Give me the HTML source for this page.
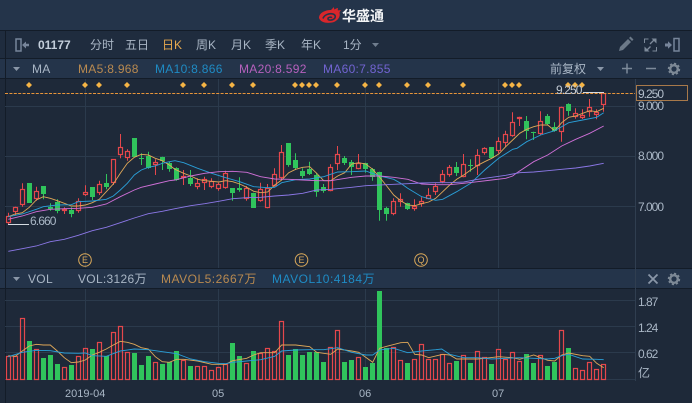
<!DOCTYPE html>
<html><head><meta charset="utf-8">
<style>
html,body{margin:0;padding:0;background:#1e2939}
#r{position:relative;width:692px;height:403px;overflow:hidden;background:#1e2939;font-family:"Liberation Sans","Noto Sans CJK SC",sans-serif;font-size:12px;color:#a9b6c5}
.b{position:absolute;left:0;width:692px}
.t{position:absolute;white-space:nowrap;line-height:16px;height:16px}
.a{font-size:11px;letter-spacing:-.5px}
svg{position:absolute;left:0;top:0}
</style></head><body>
<div id="r">
<div class="b" style="top:0;height:30px;background:#24344a"></div>
<div class="b" style="top:30px;height:1px;background:#131c28"></div>
<div class="b" style="top:31px;height:27px;background:#1f2c3e"></div>
<div class="b" style="top:58px;height:1px;background:#131c28"></div>
<div class="b" style="top:59px;height:19px;background:#24344a"></div>
<div class="b" style="top:78px;height:1px;background:#131c28"></div>
<div class="b" style="top:269px;height:19px;background:#24344a"></div>
<div class="b" style="top:268px;height:1px;background:#131c28"></div>
<div class="b" style="top:288px;height:1px;background:#131c28"></div>

<svg id="c" width="692" height="403" viewBox="0 0 692 403"></svg>

<div class="t" style="left:342px;top:7px;font-size:14px;font-weight:bold;color:#f2f4f6;line-height:18px;height:18px">华盛通</div>

<div class="t" style="left:38px;top:37px;font-weight:bold;color:#c3cedb">01177</div>
<div class="t" style="left:90px;top:37px">分时</div>
<div class="t" style="left:125px;top:37px">五日</div>
<div class="t" style="left:162px;top:37px;color:#e6a94f">日K</div>
<div class="t" style="left:196px;top:37px">周K</div>
<div class="t" style="left:231px;top:37px">月K</div>
<div class="t" style="left:265px;top:37px">季K</div>
<div class="t" style="left:301px;top:37px">年K</div>
<div class="t" style="left:343px;top:37px">1分</div>

<div class="t" style="left:32px;top:61px;letter-spacing:.3px">MA</div>
<div class="t" style="left:78px;top:61px;color:#b98a50;letter-spacing:.3px">MA5:8.968</div>
<div class="t" style="left:155px;top:61px;color:#1f8bc4;letter-spacing:.3px">MA10:8.866</div>
<div class="t" style="left:239px;top:61px;color:#b661bd;letter-spacing:.3px">MA20:8.592</div>
<div class="t" style="left:323px;top:61px;color:#7264d2;letter-spacing:.3px">MA60:7.855</div>
<div class="t" style="left:550px;top:61px">前复权</div>

<div class="t a" style="left:30px;top:213px;color:#a9b6c5;font-size:12px;letter-spacing:-.9px">6.660</div>
<div class="t a" style="left:556px;top:82px;color:#c4ccd5;font-size:12px;letter-spacing:-.9px">9.250</div>

<div class="t a" style="left:638px;top:86px;color:#b4bfcc;font-size:12px;letter-spacing:-1px">9.250</div>
<div class="t a" style="left:638px;top:98px;font-size:12px;letter-spacing:-1px">9.000</div>
<div class="t a" style="left:638px;top:148px;font-size:12px;letter-spacing:-1px">8.000</div>
<div class="t a" style="left:638px;top:199px;font-size:12px;letter-spacing:-1px">7.000</div>

<div class="t" style="left:81.5px;top:252px;color:#d9a85a;font-size:9px;width:7px;text-align:center">E</div>
<div class="t" style="left:298px;top:252px;color:#d9a85a;font-size:9px;width:7px;text-align:center">E</div>
<div class="t" style="left:417px;top:252px;color:#d9a85a;font-size:9px;width:8px;text-align:center">Q</div>

<div class="t" style="left:28px;top:271px;letter-spacing:.3px">VOL</div>
<div class="t" style="left:78px;top:271px;letter-spacing:.3px">VOL:3126万</div>
<div class="t" style="left:161px;top:271px;color:#b98a50;letter-spacing:.5px">MAVOL5:2667万</div>
<div class="t" style="left:272px;top:271px;color:#1f8bc4;letter-spacing:.5px">MAVOL10:4184万</div>

<div class="t a" style="left:638px;top:294px;font-size:12px;letter-spacing:-1px">1.87</div>
<div class="t a" style="left:638px;top:320px;font-size:12px;letter-spacing:-1px">1.24</div>
<div class="t a" style="left:638px;top:346px;font-size:12px;letter-spacing:-1px">0.62</div>
<div class="t" style="left:638px;top:365px">亿</div>

<div class="t" style="left:65px;top:386px;font-size:11px">2019-04</div>
<div class="t" style="left:212px;top:386px;font-size:11px">05</div>
<div class="t" style="left:359px;top:386px;font-size:11px">06</div>
<div class="t" style="left:492px;top:386px;font-size:11px">07</div>
</div>
<script>
var R='#e5474c',G='#30c45c',BG='#1e2939',s='';
function L(x1,y1,x2,y2,c,e){s+='<line x1="'+x1+'" y1="'+y1+'" x2="'+x2+'" y2="'+y2+'" stroke="'+c+'" '+(e||'')+'/>';}
function P(o,c){var a=[];for(var k=0;k<o.length;k++){var g=o[k],ox=g[0],oy=g[1],p=g[2];for(var i=0;i<p.length;i+=2)a.push((ox+p[i]/3).toFixed(1)+','+(oy+p[i+1]/3).toFixed(1));}
s+='<polyline fill="none" stroke="'+c+'" stroke-width=".9" points="'+a.join(' ')+'"/>';}
/* frame and grid */
L(5.5,31,5.5,403,'#131c28');
L(635.5,79,635.5,381,'#303e50');
[106.5,156.5,206.5].forEach(function(y){L(5,y,635,y,'#2b3a4c');});
[300.5,326.5,352.5,379.5].forEach(function(y){L(5,y,635,y,'#2b3a4c');});
[85.5,218.5,365.5,498.5].forEach(function(x){L(x,79,x,268,'#2b3a4c');L(x,289,x,380,'#2b3a4c');});
/* volume bars */
var V=[['R',272],['R',272],['R',160],['G',228],['R',252],['G',279],['G',270],['G',297],['R',306],['G',300],['R',274],['R',250],['G',252],['R',232],['G',274],['R',202],['R',184],['R',262],['G',264],['G',300],['G',273],['R',292],['G',297],['G',290],['G',258],['R',285],['G',303],['R',304],['R',304],['R',316],['R',306],['R',298],['G',234],['G',273],['R',293],['G',258],['R',264],['R',250],['R',258],['R',168],['G',270],['G',252],['G',270],['G',260],['G',262],['G',290],['R',246],['R',196],['G',290],['G',285],['R',276],['G',306],['G',294],['G',78],['G',250],['R',246],['R',286],['G',294],['R',282],['R',238],['R',282],['R',282],['R',268],['R',294],['G',288],['R',270],['G',294],['R',258],['R',276],['G',297],['R',252],['R',282],['R',262],['R',288],['G',268],['G',294],['R',270],['G',303],['G',291],['R',196],['G',249],['R',310],['R',316],['R',292],['R',313],['R',298]];
V.forEach(function(v,i){var l=6+7*i,t=Math.round(265+v[1]/3),b=380;
if(v[0]=='R')s+='<rect x="'+(l+.5)+'" y="'+(t+.5)+'" width="4" height="'+(b-t-1)+'" fill="none" stroke="'+R+'" stroke-width="1.2"/>';
else s+='<rect x="'+l+'" y="'+t+'" width="5" height="'+(b-t)+'" fill="'+G+'"/>';});
/* candles: color, wickTop, bodyTop, bodyBot, wickBot in zoom units */
function C(i,c,wt,bt,bb,wb,oy){var l=6+7*i,cx=l+2.5,f=function(z){return oy+z/3;};
var col=c=='R'?R:G;
L(cx,f(wt).toFixed(1),cx,f(wb).toFixed(1),col);
var t=Math.round(f(bt)),b=Math.max(Math.round(f(bb)),t+1);
if(c=='R')s+='<rect x="'+(l+.5)+'" y="'+(t+.5)+'" width="4" height="'+(b-t-1<1?1:b-t-1)+'" fill="'+BG+'" stroke="'+R+'" stroke-width="1.2"/>';
else s+='<rect x="'+l+'" y="'+t+'" width="5" height="'+(b-t)+'" fill="'+G+'"/>';}
var A=[['R',308,318,338,345],['R',290,292,305,315],['R',220,238,284,290],['G',220,220,278,278],['R',230,244,266,272],['G',228,228,252,268],['G',280,290,298,302],['G',268,276,302,310],['R',292,298,304,312],['G',292,300,312,322],['R',265,272,304,308],['R',226,247,255,258],['G',232,232,262,270],['R',212,222,250,255],['G',192,220,232,238],['R',148,148,220,225],['R',72,110,136,145],['R',118,122,143,152],['G',85,85,140,140],['G',130,143,145,165],['G',125,138,174,176],['R',148,155,165,195],['G',140,142,152,180],['G',155,160,176,185],['G',172,175,210,212]];
A.forEach(function(a,i){C(i,a[0],a[1],a[2],a[3],a[4],110);});
var B=[['R',180,197,205,225],['G',180,205,222,228],['R',205,220,232,238],['R',200,208,220,240],['R',205,214,232,235],['R',218,222,236,242],['R',182,190,233,236],['G',234,234,248,272],['G',202,234,240,245],['R',228,234,268,272],['G',248,248,293,293],['R',218,238,272,275],['R',222,235,293,295],['R',175,193,227,230],['R',105,127,203,210],['G',99,99,165,170],['G',130,150,174,180],['G',175,183,198,205],['G',155,178,191,195],['G',190,195,247,260],['G',222,232,242,248],['R',163,172,242,244],['R',108,133,163,180],['G',138,143,160,165]];
B.forEach(function(a,i){C(i+25,a[0],a[1],a[2],a[3],a[4],110);});
var D=[['G',210,217,230,255],['R',192,218,236,238],['G',218,220,236,248],['G',234,236,262,272],['G',245,245,360,392],['G',350,353,372,392],['R',325,333,372,376],['R',310,326,336,350],['G',338,338,356,360],['R',328,348,356,362],['R',322,334,342,350],['R',295,316,326,328],['R',280,288,305,315],['R',240,253,276,280],['R',225,232,254,260],['G',216,232,248,258],['R',192,223,260,262],['G',208,226,229,245],['R',178,194,228,255],['R',172,175,190,194],['G',172,172,204,204],['R',142,154,182,190],['R',122,132,158,170],['R',67,97,137,140]];
D.forEach(function(a,i){C(i+49,a[0],a[1],a[2],a[3],a[4],90);});
var E=[['R',110,110,117,138],['G',108,123,153,178],['G',155,155,160,180],['R',94,122,162,165],['G',102,108,132,136],['G',127,142,153,155],['R',80,82,157,185],['G',70,71,93,107],['R',85,100,110,116],['R',88,104,113,117],['R',57,80,95,110],['R',88,96,105,118],['R',40,40,76,95]];
E.forEach(function(a,i){C(i+73,a[0],a[1],a[2],a[3],a[4],80);});
/* MA lines */
P([[0,110,[25,320,45,312,67,308,88,292,109,270,130,260,151,265,172,272,193,280,214,288,235,288,256,285,277,278,298,268,319,245,340,222,361,190,382,160,403,142,424,133,445,135,466,145,487,152,508,165]],
[175,110,[0,178,26,190,47,198,68,208,89,212,110,214,131,216,152,212,173,215,194,222,215,232,236,244,257,248,278,246,299,225,320,210,341,188,362,178,383,172,404,170,425,190,446,212,467,212,488,198,509,188]],
[350,90,[5,222,26,218,47,222,68,238,89,262,110,288,131,315,152,332,173,345,194,347,215,341,236,336,257,325,278,305,299,285,320,268,341,255,362,240,383,226,404,215,425,205,446,192,467,170,488,150,509,130]],
[517,80,[8,160,29,148,50,140,71,135,92,135,113,152,134,128,155,112,176,108,197,100,218,92,239,95,260,85]]],'#e0a858');
P([[0,110,[25,320,67,312,109,298,130,290,172,285,214,284,235,275,277,273,319,268,340,258,361,240,382,220,403,195,424,180,445,172,466,168,487,160,508,155]],
[175,110,[0,152,26,158,68,175,110,190,152,203,194,215,236,230,278,233,299,232,320,218,362,209,404,207,446,200,488,186]],
[350,90,[5,245,47,243,89,258,131,268,152,280,173,295,215,320,257,331,278,328,320,305,362,280,404,240,446,205,488,178]],
[517,80,[0,205,29,185,71,165,113,152,155,128,197,120,239,112,260,98]]],'#2a9fd8');
P([[0,110,[25,328,67,318,109,305,151,298,193,296,235,295,277,292,319,282,361,260,403,240,424,232,466,222,508,212]],
[175,110,[0,210,47,198,89,190,131,185,173,184,215,187,257,200,299,207,341,208,383,210,425,212,467,212]],
[350,90,[5,262,47,258,89,258,131,262,173,268,215,282,257,284,299,284,341,280,383,275,425,270,467,265,488,258]],
[517,80,[0,278,50,245,92,225,134,198,176,178,218,160,260,138]]],'#d070d8');
P([[0,110,[25,424,67,416,109,408,151,395,193,388,235,376,277,362,319,352,361,338,403,324,445,311,487,304]],
[175,110,[0,296,47,287,89,281,131,274,173,266,215,263,257,262,299,258,341,255,383,250,425,240,467,238]],
[350,90,[5,292,47,287,89,285,131,283,173,281,215,279,257,278,299,278,341,276,383,268,425,262,467,256]],
[517,80,[8,278,50,276,92,272,134,268,176,264,218,258,260,250]]],'#8c78e8');
/* volume MAs */
P([[0,265,[25,272,46,274,67,258,88,243,109,238,130,240,151,240,172,258,193,278,214,293,235,291,256,285,277,270,298,262,319,252,340,240,361,229,382,232,403,238,424,248,445,252,466,275,487,290,508,292]],
[175,265,[5,283,26,283,68,288,110,298,152,298,173,287,215,280,236,270,257,263,299,263,320,240,362,240,404,245,425,262,467,268,488,252]],
[350,265,[5,258,26,262,68,292,89,250,110,244,152,233,173,232,194,268,215,270,236,278,278,268,299,270,320,282,341,282,383,282,404,280,446,275,488,278]],
[517,265,[8,283,50,270,71,278,92,286,113,288,134,270,155,264,197,272,218,274,239,295,260,308]]],'#e0a858');
P([[0,265,[25,275,67,262,109,256,151,257,193,264,235,265,256,264,277,272,319,274,361,258,403,252,445,254,487,260]],
[175,265,[5,266,47,282,89,290,131,295,152,296,173,292,215,288,257,284,299,274,320,258,362,255,404,254,446,254,488,248]],
[350,265,[5,262,47,270,68,270,89,255,131,250,173,263,215,258,257,254,275,252,299,268,341,278,383,278,425,282,467,280]],
[517,265,[8,278,50,280,92,282,113,280,134,272,155,268,197,282,239,283,260,284]]],'#2a9fd8');
/* price line and diamonds */
L(5,93.5,635,93.5,'#e8953a','stroke-dasharray="3 1.4"');
[29,85,99,127,183,204,232,253,295,302,309,316,337,365,379,407,428,463,505,512,519,568,575,582].forEach(function(x){
s+='<path d="M'+x+' 82l3 3-3 3-3-3z" fill="#f5b445"/>';});
L(583,92.5,604,92.5,'#d5dbe2');
L(8,224.5,29,224.5,'#d5dbe2');
s+='<rect x="636.5" y="85.5" width="51" height="15" fill="none" stroke="#a8794a"/>';
/* earnings circles */
[[85,260],[301.5,260],[421,260]].forEach(function(p){s+='<circle cx="'+p[0]+'" cy="'+p[1]+'" r="6.3" fill="none" stroke="#d9a85a"/>';});
/* logo */
s+='<g transform="translate(318,7)"><path d="M1 11C1 6 7 3 13 3c1-1 2-2 3-3 0 1 0 2 .5 2.500C18 1.500 19 1 20 1c-.3 1-.3 2 0 2.500 1-.3 2-.3 3 0-1 .5-1.500 1.500-1.500 2.500 1 3-1 7-5.500 9-5 1.500-13 1.500-15-4z" fill="#d9262b"/><path d="M5 11.500C6 8 11 6 15 7c3 1 3 4 0 5.500-2 1-5 .8-5-.8 0-1.500 3-2 4-1" fill="none" stroke="#24344a" stroke-width="1.600"/></g>';
/* toolbar icons */
var ic='#77859a';
s+='<rect x="16" y="39" width="5" height="12" fill="none" stroke="'+ic+'" stroke-width="1.500"/><path d="M22 45l4-3.500v2.300h3v2.400h-3v2.300z" fill="'+ic+'"/>';
s+='<path d="M619 51l1-4 8-8 3 3-8 8zM629 38l1.500-1.500 3 3L632 41z" fill="#6c7988"/>';
s+='<g fill="none" stroke="#7d8a9a" stroke-width="1"><path d="M644.500 43v-4h4M656.500 47v4h-4"/><path d="M650 44l4-4M650.500 46.500l-4 4" stroke-width="1.300"/></g><path d="M656.500 38.500v5l-5-5zM644.500 51.500v-5l5 5z" fill="#7d8a9a"/>';
s+='<path d="M665 43.500h3v-2.300l4 3.800-4 3.800v-2.300h-3z" fill="'+ic+'"/><rect x="674" y="38.500" width="5" height="12.500" fill="none" stroke="'+ic+'" stroke-width="1.500"/>';
function tri(x,y,c){s+='<path d="M'+x+' '+y+'h7l-3.500 4z" fill="'+c+'"/>';}
tri(372,43,'#6f7d8e');tri(13,67,'#8a97a8');tri(597,67,'#8a97a8');tri(13,277,'#8a97a8');
/* row icons */
s+='<path d="M622 68.500h10M627 63.500v10" stroke="#7d8a9a" stroke-width="1.500"/><path d="M646 68.500h10" stroke="#7d8a9a" stroke-width="1.500"/>';
function gear(x,y){s+='<circle cx="'+x+'" cy="'+y+'" r="3.800" fill="none" stroke="#7d8996" stroke-width="2.400"/><circle cx="'+x+'" cy="'+y+'" r="5.400" fill="none" stroke="#7d8996" stroke-width="1.600" stroke-dasharray="2.200 2"/>';}
gear(674,69);gear(674,279);
s+='<path d="M648.500 274.500l9 9M657.500 274.500l-9 9" stroke="#8a97a8" stroke-width="1.800"/>';
document.getElementById('c').innerHTML=s;
</script>
</body></html>
